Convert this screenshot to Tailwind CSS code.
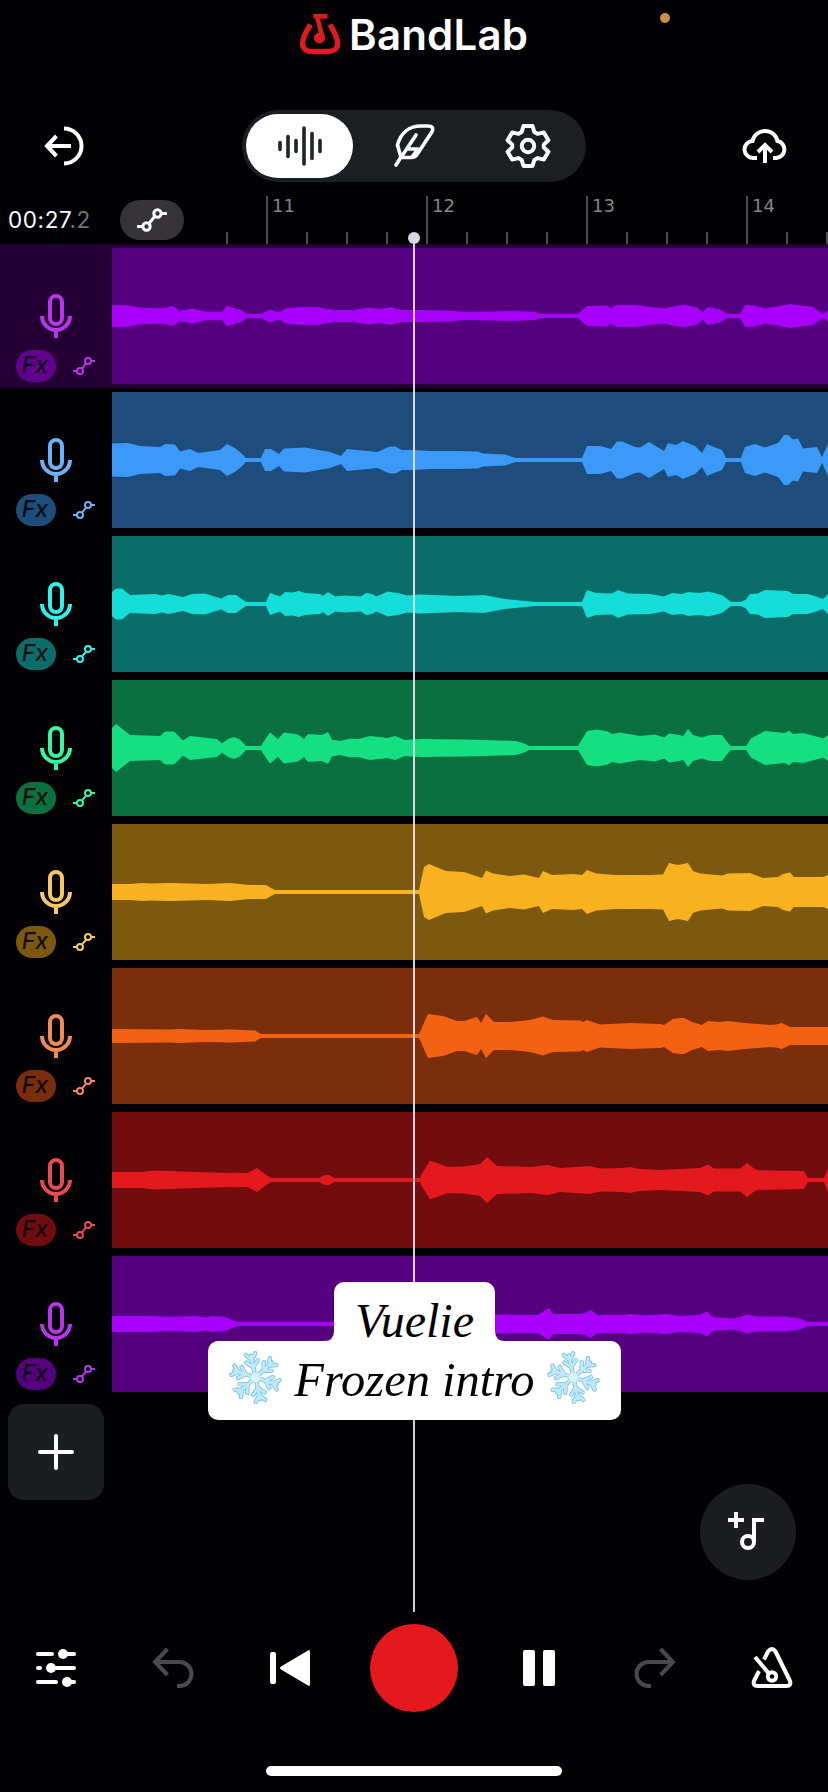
<!DOCTYPE html>
<html lang="en">
<head>
<meta charset="utf-8">
<title>BandLab</title>
<script src="https://cdn.jsdelivr.net/npm/@tailwindcss/browser@4"></script>
</head>
<body class="bg-[#020103]">
<svg class="hidden">
  <symbol id="mic" viewBox="0 0 32 44"><g fill="none" stroke="currentColor" stroke-width="4"><rect x="10" y="2" width="12" height="28" rx="6"/><path d="M2 22a14 14 0 0 0 28 0M16 36v8"/></g></symbol>
  <symbol id="auto" viewBox="0 0 22 18"><g fill="none" stroke="currentColor" stroke-width="2"><circle cx="7" cy="14" r="3"/><circle cx="15" cy="4" r="3"/><path d="M0 14h4M18 4h4M9 11.600l4-5"/></g></symbol>
  <symbol id="flake" viewBox="-26 -26 52 52">
    <g id="arms"></g>
  </symbol>
</svg>
<div class="relative flex h-[1792px] w-[828px] flex-col overflow-hidden bg-[#020103] text-white">
  <!-- Brand -->
  <header class="relative flex h-[110px] items-start pl-[299px] pt-[13px]">
    <svg class="h-[42px] w-[43px]" viewBox="0 0 43 42" fill="none" stroke="#de1b22">
      <path d="M11.500 11.500C8 17 3.600 24 3.600 30.300 3.600 36 8 38.500 13 38.500h16c5 0 9.700-2.500 9.700-8.200 0-6.300-4.700-13.300-7.700-18.800" stroke-width="5.400"/>
      <path d="M14.500 3.300h14" stroke-width="4.600"/>
      <path d="M18 3l5.500 22" stroke-width="4.600"/>
      <ellipse cx="20.500" cy="25" rx="5.600" ry="5.400" fill="#de1b22" stroke="none"/>
    </svg>
    <span class="ml-[7px] mt-[-4px] text-[42px] leading-[52px] font-semibold tracking-[0.2px] font-['Inter',sans-serif]">BandLab</span>
    <i class="absolute left-[660px] top-[13px] size-2.5 rounded-full bg-[#c99349]"></i>
  </header>

  <!-- Toolbar -->
  <nav class="flex h-[72px] items-center justify-between pl-11 pr-10">
    <svg class="h-10 w-11" viewBox="0 0 44 40" fill="none" stroke="#fff" stroke-width="4"><path d="M20 2.500a17.500 17.500 0 0 1 0 35M27 20H3M12.500 10l-9.500 10 9.500 10"/></svg>
    <div class="ml-[154px] mr-auto flex h-[72px] w-[344px] items-center rounded-full bg-[#1b1f21] p-1">
      <div class="flex h-16 w-[107px] items-center justify-center rounded-full bg-white">
        <svg class="h-10 w-[46px]" viewBox="0 0 46 40" stroke="#202327" stroke-width="3.600" stroke-linecap="round"><path d="M3 16.500v7M11 10.500v20M19 14.500v11M27 2v36M35 7.500v25M43 14.500v11"/></svg>
      </div>
      <svg class="ml-[39px] h-[46px] w-[44px]" viewBox="0 0 44 46" fill="none" stroke="#fff" stroke-width="3.600" stroke-linejoin="round" stroke-linecap="round"><path d="M4 42l5-8M9 34.500L5.500 22C9 9 18 3 29 3h7q6 0 4.500 5L25 31.500q-2 3-6 3zM9 34.500L24 12M15.500 26H26l-6 8"/></svg>
      <svg class="ml-[69px] h-[46px] w-[46px]" viewBox="-23 -23 46 46" fill="none" stroke="#fff" stroke-width="4" stroke-linejoin="round"><path d="M-4.500-20h9l1.800 6 3.200 1.900 6.300-1.500 4.600 7.900-4.600 4.200v3l4.600 4.200-4.600 7.900-6.300-1.500-3.200 1.900-1.800 6h-9l-1.800-6-3.200-1.900-6.300 1.500-4.600-7.900 4.600-4.200v-3l-4.600-4.200 4.600-7.900 6.300 1.500 3.200-1.900z"/><circle r="6.200"/></svg>
    </div>
    <svg class="h-[36px] w-[46px]" viewBox="0 0 46 36" fill="none" stroke="#fff" stroke-width="4"><path d="M15 30h-3.500a8.500 8.500 0 0 1-1-17A12.800 12.800 0 0 1 35.500 13a8.600 8.600 0 0 1-1 17H31M23 35V17M16 24l7-7 7 7"/></svg>
  </nav>

  <!-- Time and ruler -->
  <div class="flex h-[62px]">
    <div class="flex w-[226px] items-start pl-2 pt-[18px]">
      <span class="w-28 text-[22.500px] leading-10 tracking-[0.600px] font-['Inter',sans-serif]">00:27<span class="text-[#77757a]">.2</span></span>
      <span class="flex h-10 w-16 items-center justify-center rounded-full bg-[#363438]">
        <svg class="h-[26px] w-[30px]" viewBox="0 0 30 26" fill="none" stroke="#fff" stroke-width="3"><circle cx="9.500" cy="19.500" r="3.700"/><circle cx="20.500" cy="6.500" r="3.700"/><path d="M0 19.500h6M24 6.500h6M12 16.500l6-7.500"/></svg>
      </span>
    </div>
    <div id="ruler" class="flex flex-1 items-end overflow-hidden font-['DejaVu_Sans',sans-serif] text-[18px] text-[#85868e]"></div>
  </div>

  <!-- Tracks -->
  <main id="tracks" class="flex flex-col"></main>

  <div class="flex h-[210px] items-start pl-2 pt-2">
    <div class="flex size-24 items-center justify-center rounded-2xl bg-[#1b1e20]">
      <svg class="size-9" viewBox="0 0 36 36" stroke="#fff" stroke-width="4" stroke-linecap="round"><path d="M18 2v32M2 18h32"/></svg>
    </div>
  </div>

  <!-- Transport -->
  <footer class="flex h-[124px] items-center pl-9">
    <svg class="h-10 w-10" viewBox="0 0 40 40" fill="#fff" stroke="#fff" stroke-width="4" stroke-linecap="round"><path d="M2 6h14M27 6h11M2 20h2M15 20h23M2 34h18M31 34h7"/><g stroke="none"><circle cx="27" cy="6" r="5"/><circle cx="15" cy="20" r="5"/><circle cx="31" cy="34" r="5"/></g></svg>
    <svg class="ml-[76px] h-[42px] w-[42px]" viewBox="0 0 42 42" fill="none" stroke="#4b494b" stroke-width="4"><path d="M3 15h24.500a12 12 0 0 1 0 24H25M15.500 2L3 15l12.500 13"/></svg>
    <svg class="ml-[76px] h-10 w-10" viewBox="0 0 40 40" fill="#fff"><rect y="4" width="6" height="32" rx="2"/><path d="M38 2.400Q40 1 40 4v32q0 3-2 1.600L11 21.500q-2-1.500 0-3z"/></svg>
    <div class="ml-[60px] size-[88px] rounded-full bg-[#e3191d]"></div>
    <div class="ml-[65px] flex gap-2"><i class="h-9 w-3 rounded-xs bg-white"></i><i class="h-9 w-3 rounded-xs bg-white"></i></div>
    <svg class="ml-[79px] h-[42px] w-[42px]" viewBox="0 0 42 42" fill="none" stroke="#4b494b" stroke-width="4"><path d="M39 15H14.500a12 12 0 0 0 0 24H17M26.500 2L39 15 26.500 28"/></svg>
    <svg class="ml-[75px] h-[42px] w-[42px]" viewBox="0 0 42 42" fill="none" stroke="#fff" stroke-width="4" stroke-linejoin="round"><path d="M13 12.500l4-8q4-5 7.500 0L39 34q1.500 5-3.500 5h-29q-5 0-3.500-5L8 24M4 10l13.500 16"/><circle cx="21" cy="29.500" r="4.200"/></svg>
  </footer>
  <div class="mx-auto mt-9 h-2.5 w-[296px] rounded-full bg-white"></div>

  <!-- Playhead -->
  <div class="absolute left-[408px] top-[232px] flex h-[1380px] w-3 flex-col items-center">
    <i class="size-3 shrink-0 rounded-full bg-[#d6d6e0]"></i><i class="w-0.5 flex-1 bg-[#f0e6f4]/90"></i>
  </div>

  <!-- Floating add-sound button -->
  <div class="absolute left-[700px] top-[1484px] flex size-24 items-center justify-center rounded-full bg-[#1b1d21]">
    <svg class="h-[40px] w-[40px]" viewBox="0 0 40 40" fill="none" stroke="#fff" stroke-width="4"><path d="M0 8h16M8 0v16M26 30V8h10"/><circle cx="20" cy="30" r="6"/></svg>
  </div>

  <!-- Caption -->
  <div class="absolute left-[208px] top-[1282px] flex w-[413px] flex-col items-center font-['Liberation_Serif',serif] italic text-black">
    <div class="flex items-end">
      <svg class="size-2.5" viewBox="0 0 10 10" fill="#fff"><path d="M10 0v10H0Q10 10 10 0"/></svg>
      <div class="flex h-[59px] w-[161px] items-start justify-center rounded-t-[10px] bg-white pt-[12px] text-[48px] leading-[54px]">Vuelie</div>
      <svg class="size-2.5" viewBox="0 0 10 10" fill="#fff"><path d="M0 0v10h10Q0 10 0 0"/></svg>
    </div>
    <div class="flex h-[79px] w-[413px] items-start justify-center gap-[11px] rounded-[10px] bg-white pt-[10px] text-[48.500px] leading-[57px]">
      <svg class="-mt-px size-[55px]" aria-label="❄️"><use href="#flake"/></svg>
      <span class="whitespace-nowrap">Frozen intro</span>
      <svg class="-mt-px size-[55px]" aria-label="❄️"><use href="#flake"/></svg>
    </div>
  </div>
</div>

<script>
// Ruler: one cell per quarter bar, bar numbers on every fourth
const ruler = document.getElementById('ruler');
for (let i = 0; i < 16; i++) {
  const bar = i % 4 === 1;
  ruler.insertAdjacentHTML('beforeend', bar
    ? `<div class="h-12 w-10 shrink-0 border-l-2 border-[#4d4d52] pl-1 leading-[19px]">${11 + (i - 1) / 4}</div>`
    : `<div class="h-3 w-10 shrink-0 border-l-2 border-[#4d4d52]"></div>`);
}

// Snowflake: six branched arms
let arms = '';
for (let k = 0; k < 6; k++) arms += `<path transform="rotate(${k * 60 - 12})" d="M0 0V-21M0-10l-5.500-5.500M0-10l5.500-5.500M0-17l-4.500-5.500M0-17l4.500-5.500"/>`;
document.getElementById('arms').innerHTML =
  `<g fill="none" stroke-linecap="round" stroke-linejoin="round"><g stroke="#7cc0e4" stroke-width="4.200">${arms}</g><g stroke="#bdeafb" stroke-width="2.600">${arms}</g></g><circle r="4.500" fill="#d9f3fd"/>`;

// Each wave is a list of x, amplitude pairs on the timeline
const tracks = [
 {row:'#250035',clip:'#55007e',wave:'#a800fd',icon:'#b636ea',fx:'#62008f',p:'112,11 126,11 138,8.5 160,7.5 166,8 171,10 176,8.5 179,5 193,7.5 205,4.5 222,4 227,10.5 235,7.5 241,6 247,2 261,2 270,6.5 277,4 281,4.5 285,7.5 300,9 316,9 333,6 355,6 368,8.5 380,7 391,9 400,6 414,6 450,5.5 465,4 515,5 535,4 540,2 578,2 587,10 608,10.5 611,7 616,11 635,11 663,7.5 684,11.5 697,8.5 703,4 708,9 720,6.5 727,2 740,2 745,11 755,10.5 765,7.5 790,12 805,10 812,9.5 820,4 823,2 828,6'},
 {row:'#020103',clip:'#1e4d7b',wave:'#3b9af8',icon:'#6db1f6',fx:'#1e4d7b',p:'112,16.5 128,17 140,14 160,13 165,16 175,15.5 180,8.5 190,11 198,7 220,10 227,16 235,12 241,7 246,2 261,2 265,11 271,11 279,6 284,11.5 305,12.5 330,8 341,4 347,11 378,8 386,12 390,13.5 395,13.5 402,10 413,10 430,9 455,9 478,8.5 483,6.5 505,5.5 514,2.5 516,2 582,2 587,14 600,14 611,11 617,18.5 622,18.5 635,13 640,12.5 649,18 664,9 668,17 676,15 683,19 695,14 702,7 707,16 715,12.5 722,10 726,2 741,2 745,13 755,16 765,12.5 778,17 784,25 788,25 793,20.5 798,21.5 803,11.5 817,13 822,3 828,16'},
 {row:'#020103',clip:'#0b6d69',wave:'#15ddd7',icon:'#34f0ea',fx:'#0b6d69',p:'112,12 116,15.5 122,15.5 130,9 155,10 162,8.5 169,10 183,7 192,10 205,10.5 221,5.5 228,9 236,9 246,2 266,2 270,11 280,7.5 285,12 292,11.5 299,13 305,11 320,10 323,8 328,12 335,7.5 345,8.5 361,7.5 366,11 372,10 376,7.5 388,12.5 400,10.5 407,8.5 420,9.5 460,8 484,9 505,5 520,3.5 535,2 582,2 587,14 596,11 612,10.5 618,14 628,10.5 650,10 664,7.5 672,11 682,10 688,12 700,11 708,12.5 722,9 731,2 741,2 746,4.5 750,10 758,10.5 765,14 788,13 793,10 808,10 815,8 823,5 828,10'},
 {row:'#020103',clip:'#0a7040',wave:'#14e081',icon:'#37f5a0',fx:'#0a7040',p:'112,20 116,24 130,13 160,12 165,16.5 174,16.5 183,7.5 190,12 217,9 222,4.5 228,9 234,11 240,8.5 246,2 261,2 266,10 270,15.5 278,9 284,15.5 298,13.5 304,9 308,14 322,13 328,16 332,8.5 340,7 350,9.5 358,9 370,12 388,10 395,12 405,8 420,9 464,8.5 516,7 523,5 529,2 578,2 587,17 597,18.5 608,16.5 612,14 620,15.5 640,12 655,13.5 664,10.5 669,14.5 680,13 683,11.5 688,19 693,13 702,10.5 710,13 722,13 728,5 731,2 746,2 751,9.5 765,17 785,15 789,17.5 793,14 803,15 820,10.5 823,9.5 828,13'},
 {row:'#020103',clip:'#7d590f',wave:'#f8b21f',icon:'#f8c864',fx:'#7d590f',p:'112,8 130,8 142,9 150,8.5 170,9 206,8 230,9 250,7 266,7 272,3.5 275,2 419,2 424,25 429,28 446,21 464,20 482,14 486,21.5 493,18.5 510,16 524,17.5 539,14 543,21 552,17 573,18 582,17 587,22 596,18.5 615,17 650,17 663,17.5 669,29 678,27 688,29 693,21 700,18.5 722,16.5 728,18.5 750,19 763,14 778,15 783,18 790,19.5 794,15 823,15 828,17'},
 {row:'#020103',clip:'#7a2e0b',wave:'#f36113',icon:'#f38a58',fx:'#7a2e0b',p:'112,7 170,6.5 180,7 205,6 232,6.5 255,5.5 261,2 419,2 428,22 443,20 457,15 464,15 477,19 481,13 486,22 494,14 510,14 530,16 543,19.5 553,16 580,15.5 583,14 587,16 600,11.5 630,13 660,12 664,11 673,17 680,18 684,18 692,14 702,11 708,15 720,14 727,15 745,13 770,11 776,11.5 782,13 790,9 828,9'},
 {row:'#020103',clip:'#710c0f',wave:'#e3191d',icon:'#e94b50',fx:'#710c0f',p:'112,8 142,8 155,9.5 210,7.5 247,7 257,12 265,6 271,2 319,2 325,5 329,5 334,2 420,2 423,8 430,19.5 448,13 464,13.5 480,16 487,23 497,14 530,13 548,15 560,12 590,14 600,11.5 622,12 630,13 640,11 660,10 700,12 708,15.5 714,11.5 740,11.5 747,17 756,10 804,9 808,2 824,2 828,12'},
 {row:'#020103',clip:'#55007e',wave:'#a800fd',icon:'#b636ea',fx:'#55007e',p:'112,8 150,8 170,7 195,8 206,6.5 212,8 225,7 233,4 237,2 420,2 424,9 494,9.5 530,9 538,9 544,13 549,16 553,10 582,10 591,14 597,9 620,9 630,10 645,8.5 667,10 680,8 700,9 707,12.5 712,7 735,5.5 747,9.5 757,7.5 785,7.5 800,5.5 808,2 828,2'}
];
document.getElementById('tracks').innerHTML = tracks.map(t => {
  const pts = t.p.split(' ').map(s => s.split(',').map(Number));
  const outline = [...pts.map(([x, h]) => `${x},${-h}`), ...pts.reverse().map(([x, h]) => `${x},${h}`)].join(' ');
  return `<section class="flex h-36 items-center" style="background:${t.row}">
    <div class="flex h-36 w-28 shrink-0 flex-col items-center pt-[50px]" style="color:${t.icon}">
      <svg class="h-11 w-8"><use href="#mic"/></svg>
      <div class="mt-3 flex w-28 items-center pl-4">
        <span class="flex h-8 w-10 items-center justify-center rounded-full pr-0.5 pb-0.5 text-[23px] font-medium italic leading-none text-black/85 font-['Inter',sans-serif]" style="background:${t.fx}">Fx</span>
        <svg class="ml-[17px] h-[18px] w-[22px]"><use href="#auto"/></svg>
      </div>
    </div>
    <svg class="h-[136px] w-[716px]" viewBox="112 -68 716 136" style="background:${t.clip}"><polygon points="${outline}" fill="${t.wave}"/></svg>
  </section>`;
}).join('');
</script>
</body>
</html>
